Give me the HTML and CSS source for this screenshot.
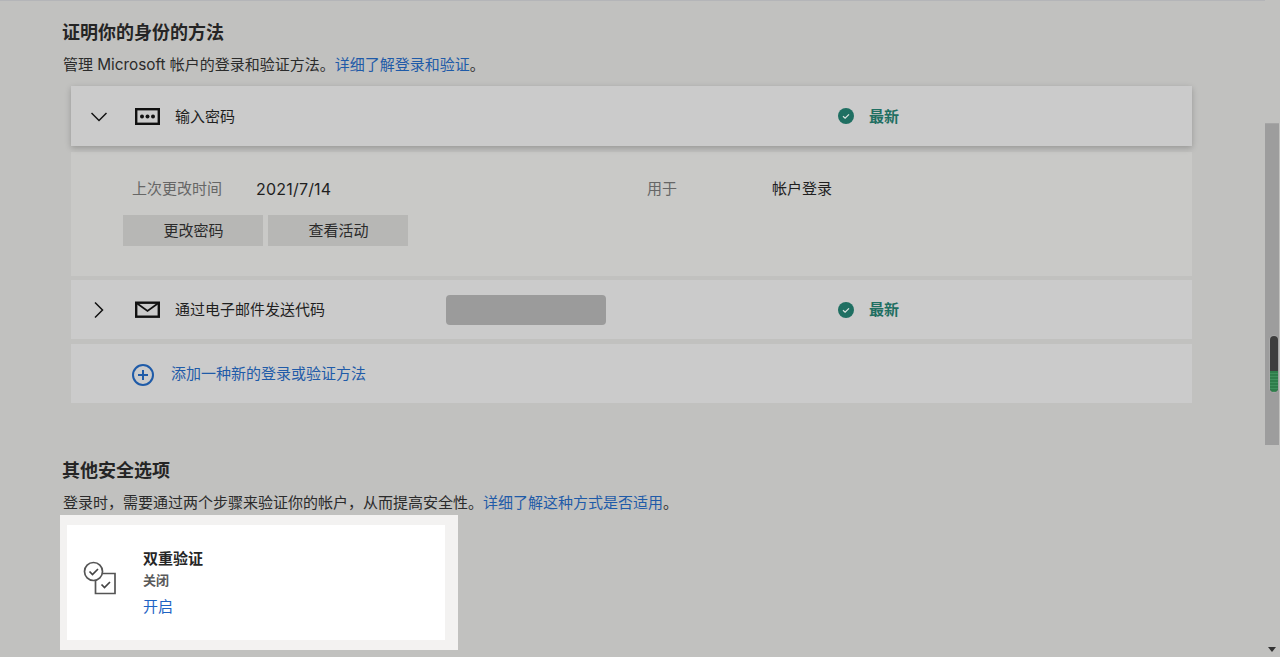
FILE: index.html
```html
<!DOCTYPE html>
<html lang="zh-CN">
<head>
<meta charset="utf-8">
<title>安全信息</title>
<link rel="stylesheet" href="styles.css">
</head>
<body>
<div class="page">
  <h2 class="title first">证明你的身份的方法</h2>
  <p class="desc">管理 <span class="latin">Microsoft</span> 帐户的登录和验证方法。<a class="link">详细了解登录和验证</a>。</p>
  <div class="list">
    <div class="row raised">
      <svg class="chev" width="16" height="16" viewBox="0 0 16 16"><path d="M0.5 5 L8 12.5 L15.5 5" fill="none" stroke="#111" stroke-width="1.5"/></svg>
      <svg class="ico" width="26" height="17" viewBox="0 0 26 17"><rect x="1.2" y="1.2" width="22.6" height="14.6" fill="none" stroke="#111" stroke-width="2.4"/><circle cx="7" cy="8.5" r="2" fill="#111"/><circle cx="12.5" cy="8.5" r="2" fill="#111"/><circle cx="18" cy="8.5" r="2" fill="#111"/></svg>
      <span class="name">输入密码</span>
      <span class="status"><svg width="16" height="16" viewBox="0 0 16 16"><circle cx="8" cy="8" r="8" fill="#1f6f62"/><path d="M5 8.3 L7.1 10.2 L11 6.3" fill="none" stroke="#dfe5e2" stroke-width="1.2"/></svg><b>最新</b></span>
    </div>
    <div class="detail">
      <div class="facts">
        <span class="label">上次更改时间</span><span class="val date">2021/7/14</span>
        <span class="label used">用于</span><span class="val login">帐户登录</span>
      </div>
      <div class="btns"><span class="btn">更改密码</span><span class="btn">查看活动</span></div>
    </div>
    <div class="row">
      <svg class="chev" width="16" height="16" viewBox="0 0 16 16"><path d="M4 0.5 L11.5 8 L4 15.5" fill="none" stroke="#111" stroke-width="1.5"/></svg>
      <svg class="ico" width="26" height="17" viewBox="0 0 26 17"><rect x="1.2" y="1.7" width="22.6" height="14" fill="none" stroke="#111" stroke-width="2.4"/><path d="M1.5 2 L12.5 10 L23.5 2" fill="none" stroke="#111" stroke-width="1.8"/></svg>
      <span class="name">通过电子邮件发送代码</span>
      <span class="redact"></span>
      <span class="status near"><svg width="16" height="16" viewBox="0 0 16 16"><circle cx="8" cy="8" r="8" fill="#1f6f62"/><path d="M5 8.3 L7.1 10.2 L11 6.3" fill="none" stroke="#dfe5e2" stroke-width="1.2"/></svg><b>最新</b></span>
    </div>
    <div class="row add">
      <svg class="plus" width="22" height="22" viewBox="0 0 22 22"><circle cx="11" cy="11" r="10" fill="none" stroke="#1f5ba8" stroke-width="2"/><path d="M11 6 V16 M6 11 H16" stroke="#1f5ba8" stroke-width="2"/></svg>
      <a class="link addtext">添加一种新的登录或验证方法</a>
    </div>
  </div>
  <h2 class="title second">其他安全选项</h2>
  <p class="desc">登录时，需要通过两个步骤来验证你的帐户，从而提高安全性。<a class="link">详细了解这种方式是否适用</a>。</p>
  <div class="halo">
    <div class="card">
      <svg class="cardicon" width="34" height="34" viewBox="0 0 34 34"><circle cx="10.5" cy="10.5" r="9" fill="none" stroke="#555" stroke-width="1.7"/><path d="M6.5 10.5 L9.5 13.5 L15 8" fill="none" stroke="#444" stroke-width="1.7"/><path d="M19.5 12.5 H32 V32.5 H12.5 V19.5" fill="none" stroke="#555" stroke-width="1.7"/><path d="M18.5 23.5 L21.5 26.5 L27 21" fill="none" stroke="#444" stroke-width="1.7"/></svg>
      <div class="cardtext">
        <strong>双重验证</strong>
        <span class="off">关闭</span>
        <a class="on">开启</a>
      </div>
    </div>
  </div>
</div>
<div class="scrollbar">
  <div class="thumb"></div>
  <div class="meter"><div class="meter-fill"></div></div>
  <div class="arrow"></div>
</div>
</body>
</html>
```
FILE: styles.css
```css
* { box-sizing: border-box; }
html, body { margin: 0; height: 657px; overflow: hidden; }
body {
  background: #c1c1bf;
  font-family: Inter, "Noto Sans CJK SC", sans-serif;
  font-size: 15px;
  color: #242424;
}
.page { width: 1265px; padding: 0 0 0 62px; border-top: 1px solid #b4b5b8; }
.title { margin: 0; font-size: 18px; line-height: 24px; font-weight: 700; color: #252525; font-family: "Noto Sans CJK SC", sans-serif; }
.first { padding-top: 18px; }
.second { margin-top: 54px; }
.desc { margin: 10px 0 0; padding-left: 1px; font-size: 15px; line-height: 24px; color: #2b2b2b; }
.second + .desc { margin-top: 10px; }
.latin { font-size: 15.3px; }
.link { color: #1f5ba8; }
.list { margin: 9px 0 0 9px; width: 1121px; display: flex; flex-direction: column; gap: 4px; }
.row { height: 59px; background: #cbcbcb; display: flex; align-items: center; padding-left: 20px; position: relative; }
.raised { height: 60px; box-shadow: 0 2px 6px rgba(0,0,0,.22); margin-bottom: 2px; }
.chev { flex: none; width: 16px; }
.ico { flex: none; margin-left: 28px; }
.name { margin-left: 14px; padding-bottom: 2px; font-size: 15px; color: #1f1f1f; width: 271px; }
.redact { width: 160px; height: 30px; border-radius: 4px; background: #9b9b9b; flex: none; }
.status { display: flex; align-items: center; gap: 15px; margin-left: 392px; color: #1f6f62; font-size: 15px; }
.status.near { margin-left: 232px; }
.status b { font-weight: 700; padding-bottom: 2px; }
.detail { height: 124px; background: #c9c9c7; padding: 25px 0 0 52px; }
.facts { display: flex; font-size: 15px; line-height: 24px; }
.label { width: 124px; color: #666; margin-left: 9px; flex: none; }
.val { color: #1f1f1f; flex: none; }
.date { font-size: 16px; letter-spacing: .2px; }
.facts .val:nth-child(2) { width: 391px; }
.used { width: 125px; margin-left: 0; }
.btns { display: flex; gap: 5px; margin-top: 14px; }
.btn { width: 140px; height: 31px; padding: 0 0 2px 1px; background: #b7b7b5; display: flex; align-items: center; justify-content: center; font-size: 15px; color: #2b2b2b; }
.add { padding-left: 61px; margin-top: 1px; }
.plus { margin-top: 2px; flex: none; }
.addtext { margin-left: 17px; padding-bottom: 2px; font-size: 15px; }
.halo { margin: 0 0 0 -2px; width: 398px; height: 135px; background: #f3f2f1; padding: 10px 13px 10px 7px; }
.card { background: #fff; height: 115px; display: flex; align-items: center; padding-left: 16px; }
.cardicon { flex: none; margin-bottom: 9px; }
.cardtext { display: flex; flex-direction: column; margin-left: 26px; padding-top: 4px; }
.cardtext strong { font-size: 15px; line-height: 22px; color: #262626; font-weight: 700; }
.off { font-size: 13px; line-height: 22px; margin-top: -1px; color: #5a5a5a; font-weight: 700; }
.on { font-size: 15px; line-height: 30px; margin-top: 1px; color: #1e63c4; }
.scrollbar { position: fixed; top: 0; right: 0; width: 15px; height: 657px; }
.thumb { position: absolute; left: 0; top: 123px; width: 14px; height: 322px; background: #9d9d9d; border-top: 1px solid #a6a6a6; }
.meter { position: absolute; left: 5px; top: 336px; width: 8px; height: 56px; background: #3e3e3e; border-radius: 4px; overflow: hidden; box-shadow: 0 0 0 1px rgba(200,200,200,.25); }
.meter-fill { position: absolute; left: 0; bottom: 0; width: 100%; height: 21px; background: repeating-linear-gradient(#2e7d4a 0 2px, #3f8f5c 2px 3px); }
.arrow { position: absolute; left: 3px; top: 647px; width: 0; height: 0; border-left: 4px solid transparent; border-right: 4px solid transparent; border-top: 5px solid #333; }
```
